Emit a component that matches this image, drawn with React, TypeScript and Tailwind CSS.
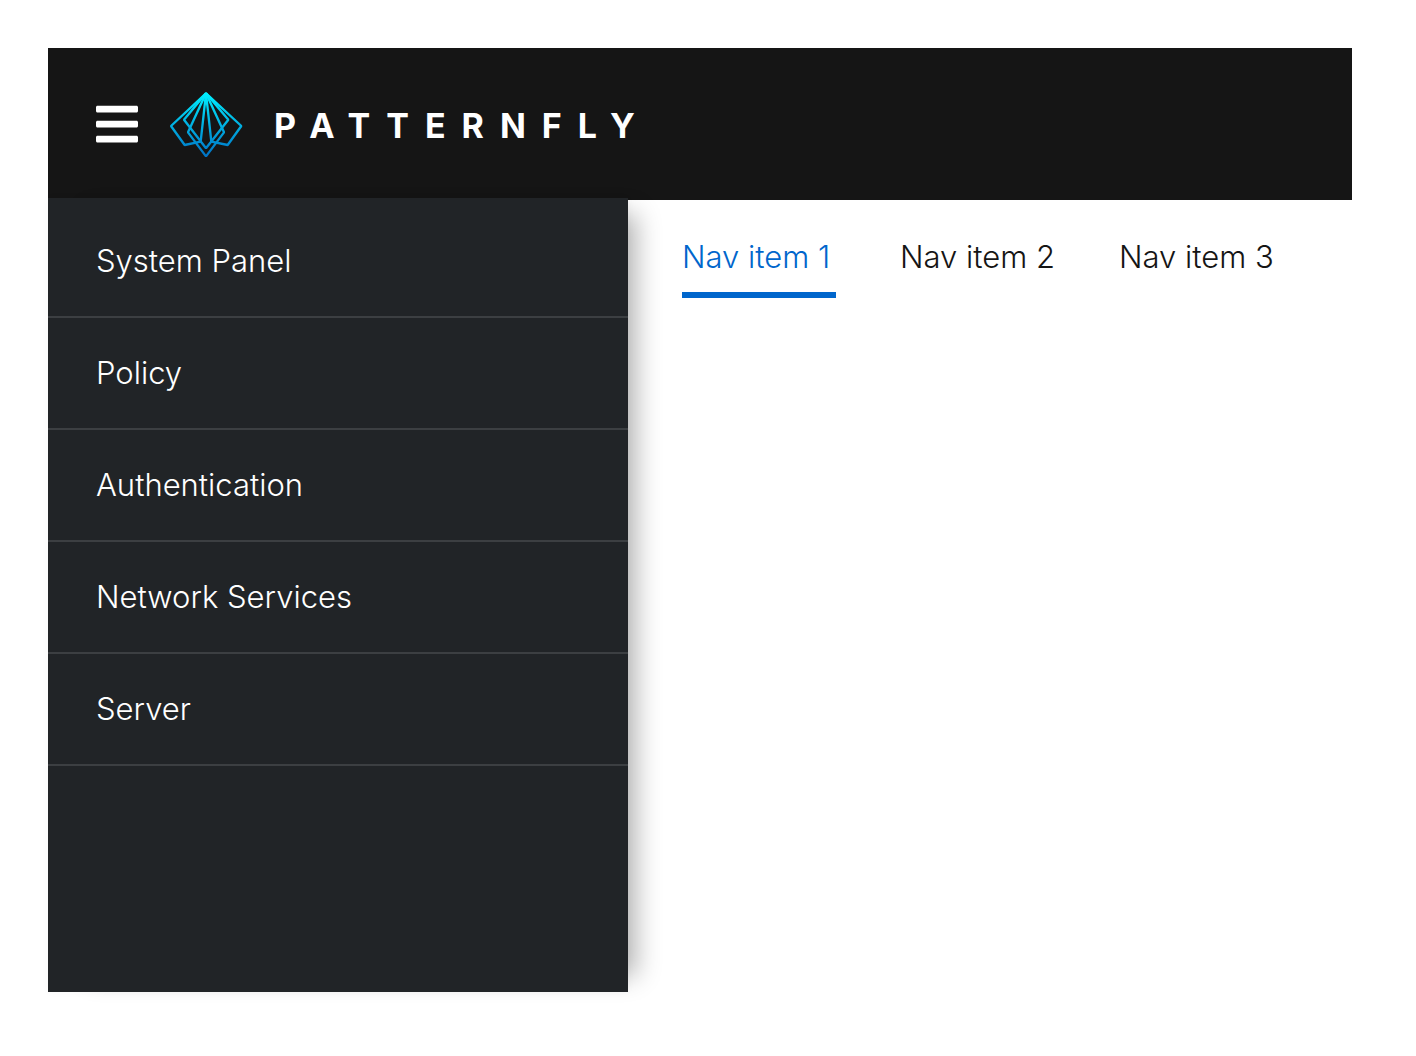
import { FaBars } from "react-icons/fa";

const sections = ["System Panel", "Policy", "Authentication", "Network Services", "Server"];
const tabs = ["Nav item 1", "Nav item 2", "Nav item 3"];

function Logo() {
  return (
    <svg
      viewBox="0 -3 276 246"
      className="h-[82px] w-[92px]"
      fill="none"
      stroke="url(#brand)"
      strokeWidth="7"
      strokeLinejoin="bevel"
      aria-hidden="true"
    >
      <defs>
        <linearGradient id="brand" gradientUnits="userSpaceOnUse" x1="138" y1="26" x2="138" y2="220">
          <stop offset="0" stopColor="#00f0ff" />
          <stop offset="1" stopColor="#0070c4" />
        </linearGradient>
      </defs>
      <path d="M138 28 L33 126 L74 183 L122 173 Z" />
      <path d="M138 28 L244 126 L203 183 L154 173 Z" />
      <path d="M138 28 L72 107 L138 193 L205 107 Z" />
      <path d="M138 28 L84 145 L138 217 L192 145 Z" />
    </svg>
  );
}

export default function App() {
  return (
    <div className="flex min-h-screen flex-col bg-white pt-12 pr-16 pb-16 pl-12 font-['Inter',sans-serif] text-[31px] leading-[46px] font-light text-[#151515]">
      <header className="flex h-[152px] items-center bg-[#151515] px-12 text-white">
        <button type="button" aria-label="Toggle navigation">
          <FaBars className="h-12 w-[42px]" />
        </button>
        <a href="#home" className="ml-[22px] flex items-center gap-[22px]">
          <Logo />
          <span className="pt-1 text-[34px] font-bold tracking-[16px]">PATTERNFLY</span>
        </a>
      </header>
      <div className="flex flex-1">
        <nav
          aria-label="Sections"
          className="-mt-0.5 w-[580px] shrink-0 bg-[#212427] pt-2 shadow-[24px_0_24px_-16px_rgba(3,3,3,0.3),0_0_8px_rgba(3,3,3,0.03)]"
        >
          <ul>
            {sections.map((label) => (
              <li key={label}>
                <a href="#section" className="block border-b-2 border-[#3c3f42] px-12 py-8 text-white">
                  {label}
                </a>
              </li>
            ))}
          </ul>
        </nav>
        <main className="flex-1 pt-8 pl-[54px]">
          <nav aria-label="Tabs">
            <ul className="flex gap-16">
              {tabs.map((label, i) => (
                <li key={label}>
                  <a
                    href="#tab"
                    aria-current={i === 0 ? "page" : undefined}
                    className={
                      i === 0
                        ? "block min-w-[154px] border-b-[6px] border-[#0066cc] pt-0.5 pb-3 whitespace-nowrap text-[#0066cc]"
                        : "block min-w-[154px] border-b-[6px] border-transparent pt-0.5 pb-3 whitespace-nowrap"
                    }
                  >
                    {label}
                  </a>
                </li>
              ))}
            </ul>
          </nav>
        </main>
      </div>
    </div>
  );
}
